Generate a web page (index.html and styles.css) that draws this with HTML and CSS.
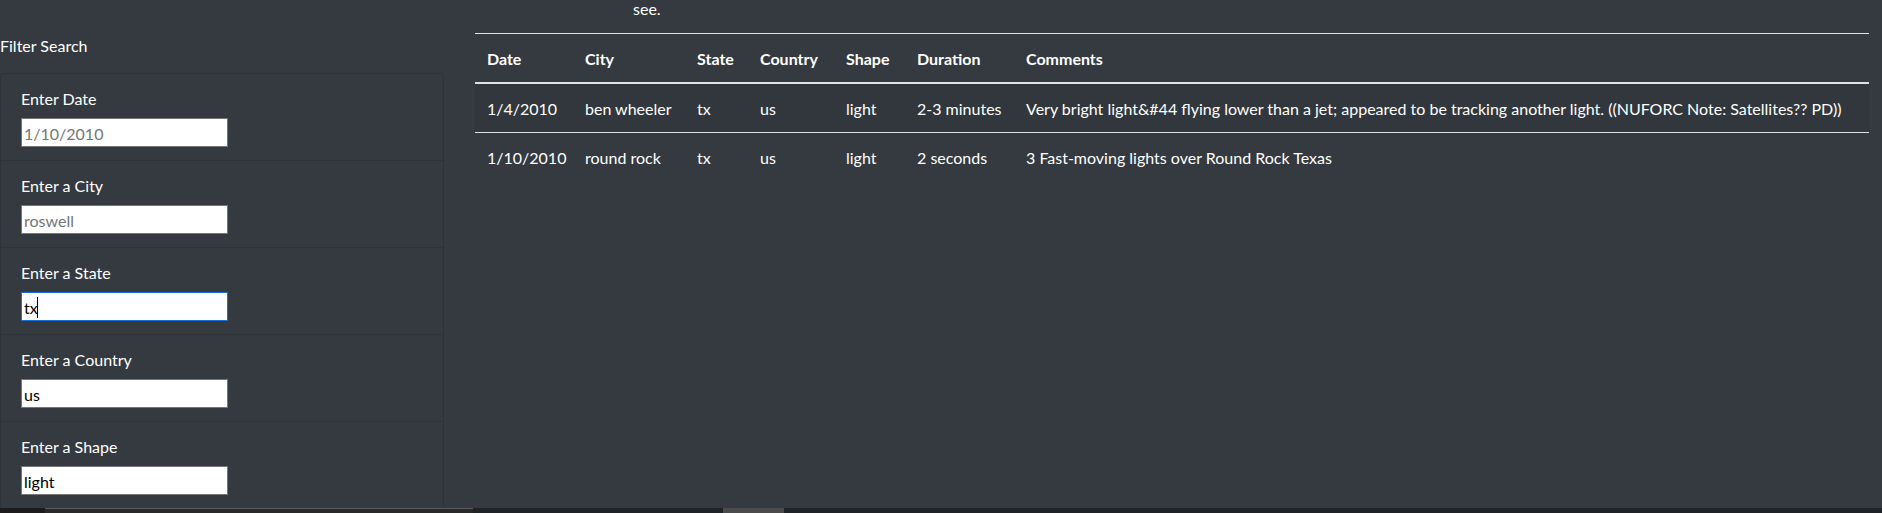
FILE: index.html
```html
<!DOCTYPE html>
<html lang="en">
<head>
<meta charset="utf-8">
<title>UFO Sightings</title>
<link rel="stylesheet" href="styles.css">
</head>
<body>
<div class="page">
  <aside class="filters">
    <div class="filters-title">Filter Search</div>
    <ul class="list-group">
      <li class="list-group-item">
        <label class="field-label" for="datetime">Enter Date</label>
        <div class="field-wrap"><input class="field" id="datetime" type="text" placeholder="1/10/2010"></div>
      </li>
      <li class="list-group-item">
        <label class="field-label" for="city">Enter a City</label>
        <div class="field-wrap"><input class="field" id="city" type="text" placeholder="roswell"></div>
      </li>
      <li class="list-group-item">
        <label class="field-label" for="state">Enter a State</label>
        <div class="field-wrap"><input class="field field-focused" id="state" type="text" value="tx"><span class="caret"></span></div>
      </li>
      <li class="list-group-item">
        <label class="field-label" for="country">Enter a Country</label>
        <div class="field-wrap"><input class="field" id="country" type="text" value="us"></div>
      </li>
      <li class="list-group-item">
        <label class="field-label" for="shape">Enter a Shape</label>
        <div class="field-wrap"><input class="field" id="shape" type="text" value="light"></div>
      </li>
    </ul>
  </aside>
  <main class="results">
    <p class="intro">see.</p>
    <table class="ufo-table">
      <colgroup>
        <col class="c-date"><col class="c-city"><col class="c-state"><col class="c-country"><col class="c-shape"><col class="c-duration"><col class="c-comments">
      </colgroup>
      <thead>
        <tr><th>Date</th><th>City</th><th>State</th><th>Country</th><th>Shape</th><th>Duration</th><th>Comments</th></tr>
      </thead>
      <tbody>
        <tr><td>1/4/2010</td><td>ben wheeler</td><td>tx</td><td>us</td><td>light</td><td>2-3 minutes</td><td>Very bright light&amp;#44 flying lower than a jet; appeared to be tracking another light. ((NUFORC Note: Satellites?? PD))</td></tr>
        <tr><td>1/10/2010</td><td>round rock</td><td>tx</td><td>us</td><td>light</td><td>2 seconds</td><td>3 Fast-moving lights over Round Rock Texas</td></tr>
      </tbody>
    </table>
  </main>
</div>
<div class="hscroll">
  <span class="hs-edge"></span>
  <span class="hs-track"></span>
  <span class="hs-gap"></span>
  <span class="hs-thumb"></span>
</div>
</body>
</html>
```
FILE: styles.css
```css
html, body {
  margin: 0;
  padding: 0;
}
body {
  background: #343a40;
  color: #fff;
  font-family: Lato, "Open Sans", "Liberation Sans", sans-serif;
  font-size: 16px;
  line-height: 1.5;
  height: 513px;
  overflow: hidden;
}
.page {
  height: 508px;
  overflow: hidden;
  display: grid;
  grid-template-columns: 444px 1fr;
  column-gap: 31px;
  padding-right: 13px;
  box-sizing: border-box;
}
.filters {
  padding-top: 34px;
}
.filters-title {
  line-height: 24px;
  margin-bottom: 15px;
}
.list-group {
  list-style: none;
  margin: 0;
  padding: 0;
}
.list-group-item {
  border: 1px solid #2e3338;
  padding: 13px 20px;
  margin-top: -1px;
}
.list-group-item:first-child {
  margin-top: 0;
  border-top-left-radius: 4px;
  border-top-right-radius: 4px;
}
.field-label {
  display: block;
  line-height: 24px;
  margin-bottom: 7px;
}
.field-wrap {
  position: relative;
  width: 207px;
}
.field {
  display: block;
  box-sizing: border-box;
  width: 207px;
  height: 29px;
  margin: 0;
  padding: 2px 2px 0;
  border: 1px solid #767676;
  background: #fff;
  color: #000;
  font-family: inherit;
  font-size: 16px;
  outline: none;
}
.field::placeholder {
  color: #757575;
}
.field-focused {
  border-color: #1a6fd6;
}
.caret {
  position: absolute;
  left: 16px;
  top: 5px;
  width: 1px;
  height: 21px;
  background: #000;
}
.results {
  min-width: 0;
}
.intro {
  margin: -3px 0 12px;
  padding-left: 158px;
  line-height: 24px;
}
.ufo-table {
  width: 100%;
  table-layout: fixed;
  border-collapse: collapse;
}
.c-date { width: 98px; }
.c-city { width: 112px; }
.c-state { width: 63px; }
.c-country { width: 86px; }
.c-shape { width: 71px; }
.c-duration { width: 109px; }
.c-comments { width: auto; }
.ufo-table th,
.ufo-table td {
  padding: 13px 12px 11px;
  line-height: 24px;
  text-align: left;
  border-top: 1px solid #dee2e6;
  white-space: nowrap;
  overflow: hidden;
}
.ufo-table th {
  font-weight: 700;
  vertical-align: bottom;
  border-bottom: 2px solid #dee2e6;
}
.ufo-table tbody tr:nth-of-type(odd) {
  background: rgba(0, 0, 0, 0.05);
}
.hscroll {
  display: flex;
  height: 5px;
  background: #1f2226;
}
.hs-edge {
  width: 45px;
  background: #1c1c1c;
}
.hs-track {
  width: 428px;
  background: #292929;
  border-top: 1px solid #5a5a5a;
  box-sizing: border-box;
}
.hs-gap {
  width: 250px;
}
.hs-thumb {
  width: 61px;
  background: #4b4b4b;
}
```
